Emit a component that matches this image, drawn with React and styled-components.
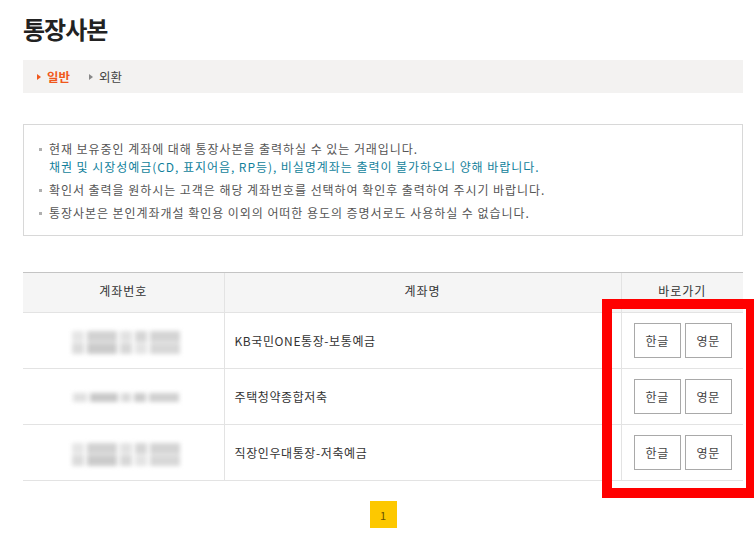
import React from "react";
import styled, { createGlobalStyle } from "styled-components";

const GlobalStyle = createGlobalStyle`
  html, body {
    margin: 0;
    padding: 0;
    background: #fff;
  }
  body {
    font-family: "Noto Sans CJK KR", "Noto Sans", sans-serif;
    color: #333;
  }
`;

const Page = styled.div`
  position: relative;
  width: 754px;
  height: 538px;
  overflow: hidden;
  padding: 0 11px 0 23px;
  box-sizing: border-box;
`;

const Title = styled.h1`
  margin: 0;
  padding-top: 13px;
  height: 60px;
  box-sizing: border-box;
  font-size: 24px;
  font-weight: 700;
  letter-spacing: -1px;
  color: #222;
  line-height: 32px;
`;

const TabBar = styled.div`
  display: flex;
  align-items: center;
  gap: 19px;
  height: 33px;
  padding-left: 14px;
  background: #f3f2f1;
`;

const Tab = styled.span`
  display: flex;
  align-items: center;
  gap: 6px;
  font-size: 12.5px;
  font-weight: ${p => (p.active ? 700 : 400)};
  color: ${p => (p.active ? "#f0581c" : "#444")};
  &::before {
    content: "";
    border-left: 4px solid ${p => (p.active ? "#f0581c" : "#888")};
    border-top: 3.5px solid transparent;
    border-bottom: 3.5px solid transparent;
  }
`;

const InfoBox = styled.ul`
  list-style: none;
  margin: 31px 0 0;
  padding: 15px 0 15px 14px;
  height: 112px;
  box-sizing: border-box;
  border: 1px solid #d8d8d8;
`;

const InfoItem = styled.li`
  position: relative;
  padding-left: 11px;
  font-size: 12px;
  line-height: 18px;
  letter-spacing: 0.95px;
  color: #555;
  margin-bottom: 5px;
  &::before {
    content: "";
    position: absolute;
    left: 1px;
    top: 8px;
    width: 3px;
    height: 3px;
    background: #b0b0b0;
  }
`;

const Notice = styled.span`
  display: block;
  color: #127f9b;
`;

const Table = styled.table`
  margin-top: 36px;
  width: 720px;
  border-collapse: collapse;
  table-layout: fixed;
  font-size: 12px;
  letter-spacing: 0.6px;
  color: #333;
`;

const HeadCell = styled.th`
  height: 35px;
  padding: 0 0 4px;
  background: #f5f5f5;
  border-top: 1px solid #c4c4c4;
  border-bottom: 1px solid #e3e3e3;
  border-left: 1px solid #e3e3e3;
  font-weight: 400;
  letter-spacing: 1px;
  text-align: center;
  &:first-child {
    border-left: none;
  }
`;

const Cell = styled.td`
  height: 55px;
  border-bottom: 1px solid #e3e3e3;
  border-left: 1px solid #e3e3e3;
  text-align: ${p => p.align || "center"};
  padding: ${p => (p.align === "left" ? "0 0 0 10px" : "0")};
  &:first-child {
    border-left: none;
  }
`;

const Blurred = styled.div`
  display: inline-flex;
  flex-direction: column;
  gap: 1px;
  filter: blur(2px);
  margin-left: 6px;
`;

const BlurRow = styled.div`
  display: flex;
  gap: 3px;
`;

const BlurBlock = styled.span`
  display: block;
  width: ${p => p.w}px;
  height: ${p => p.h || 11}px;
  background: ${p => p.c || "#d4d4d4"};
`;

const Buttons = styled.div`
  display: flex;
  justify-content: center;
  gap: 4px;
  padding-left: 1px;
`;

const SmallButton = styled.button`
  width: 47px;
  height: 35px;
  border: 1px solid #a9a9a9;
  background: #fff;
  font-family: inherit;
  font-size: 12px;
  letter-spacing: 0.6px;
  color: #444;
  padding: 0;
`;

const Pager = styled.div`
  display: flex;
  justify-content: center;
  margin-top: 20px;
`;

const PageNum = styled.span`
  width: 27px;
  height: 27px;
  display: flex;
  align-items: center;
  justify-content: center;
  background: #fdc800;
  color: #6a5200;
  font-size: 11px;
`;

const Highlight = styled.div`
  position: absolute;
  left: 602px;
  top: 299px;
  width: 154px;
  height: 199px;
  box-sizing: border-box;
  border: 10px solid #ff0000;
  pointer-events: none;
`;

const accounts = [
  { name: "KB국민ONE통장-보통예금", blur: "double" },
  { name: "주택청약종합저축", blur: "single" },
  { name: "직장인우대통장-저축예금", blur: "double" }
];

const AccountBlur = ({ kind }) =>
  kind === "single" ? (
    <Blurred>
      <BlurRow>
        <BlurBlock w={14} h={9} c="#e0e0e0" />
        <BlurBlock w={28} h={9} c="#c8c8c8" />
        <BlurBlock w={10} h={9} c="#dadada" />
        <BlurBlock w={12} h={9} c="#cccccc" />
        <BlurBlock w={30} h={9} c="#d0d0d0" />
      </BlurRow>
    </Blurred>
  ) : (
    <Blurred>
      <BlurRow>
        <BlurBlock w={12} c="#e6e6e6" />
        <BlurBlock w={30} c="#d2d2d2" />
        <BlurBlock w={12} c="#e2e2e2" />
        <BlurBlock w={12} c="#d6d6d6" />
        <BlurBlock w={30} c="#d4d4d4" />
      </BlurRow>
      <BlurRow>
        <BlurBlock w={12} c="#dcdcdc" />
        <BlurBlock w={30} c="#cbcbcb" />
        <BlurBlock w={12} c="#d8d8d8" />
        <BlurBlock w={12} c="#e4e4e4" />
        <BlurBlock w={30} c="#d8d8d8" />
      </BlurRow>
    </Blurred>
  );

export default function App() {
  return (
    <>
      <GlobalStyle />
      <Page>
        <Title>통장사본</Title>
        <TabBar>
          <Tab active>일반</Tab>
          <Tab>외환</Tab>
        </TabBar>
        <InfoBox>
          <InfoItem>
            현재 보유중인 계좌에 대해 통장사본을 출력하실 수 있는 거래입니다.
            <Notice>
              채권 및 시장성예금(CD, 표지어음, RP등), 비실명계좌는 출력이 불가하오니 양해 바랍니다.
            </Notice>
          </InfoItem>
          <InfoItem>
            확인서 출력을 원하시는 고객은 해당 계좌번호를 선택하여 확인후 출력하여 주시기 바랍니다.
          </InfoItem>
          <InfoItem>
            통장사본은 본인계좌개설 확인용 이외의 어떠한 용도의 증명서로도 사용하실 수 없습니다.
          </InfoItem>
        </InfoBox>
        <Table>
          <colgroup>
            <col style={{ width: 201 }} />
            <col style={{ width: 397 }} />
            <col style={{ width: 122 }} />
          </colgroup>
          <thead>
            <tr>
              <HeadCell>계좌번호</HeadCell>
              <HeadCell>계좌명</HeadCell>
              <HeadCell>바로가기</HeadCell>
            </tr>
          </thead>
          <tbody>
            {accounts.map(acc => (
              <tr key={acc.name}>
                <Cell>
                  <AccountBlur kind={acc.blur} />
                </Cell>
                <Cell align="left">{acc.name}</Cell>
                <Cell>
                  <Buttons>
                    <SmallButton>한글</SmallButton>
                    <SmallButton>영문</SmallButton>
                  </Buttons>
                </Cell>
              </tr>
            ))}
          </tbody>
        </Table>
        <Pager>
          <PageNum>1</PageNum>
        </Pager>
        <Highlight />
      </Page>
    </>
  );
}
